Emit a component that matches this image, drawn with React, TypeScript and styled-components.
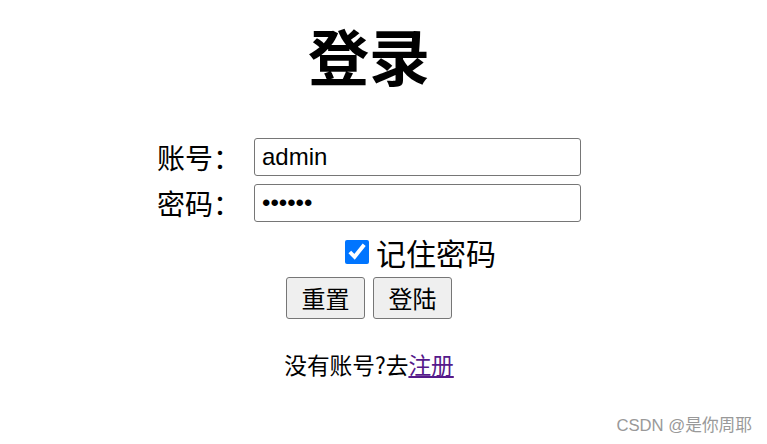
import React from "react";
import styled, { createGlobalStyle } from "styled-components";

const Global = createGlobalStyle`
  html, body { margin: 0; padding: 0; background: #fff; }
  body { font-family: "Liberation Sans", "Noto Sans CJK SC", sans-serif; color: #000; }
`;

const Page = styled.div`
  position: relative;
  width: 767px;
  height: 444px;
  overflow: hidden;
`;

const Column = styled.div`
  width: 738px;
  display: flex;
  flex-direction: column;
  align-items: center;
`;

const Title = styled.h1`
  margin: 25px 0 0;
  font-family: "Noto Sans CJK SC", sans-serif;
  font-size: 61px;
  line-height: 60px;
  font-weight: 700;
`;

const Form = styled.div`
  margin-top: 53px;
  display: grid;
  grid-template-columns: auto 327px;
  column-gap: 13px;
  row-gap: 8px;
  align-items: center;
`;

const Label = styled.label`
  font-family: "Noto Sans CJK SC", sans-serif;
  font-size: 28px;
  line-height: 38px;
`;

const Field = styled.input`
  box-sizing: border-box;
  width: 327px;
  height: 38px;
  padding: 0 7px;
  border: 1px solid #767676;
  border-radius: 3px;
  font-family: "Liberation Sans", sans-serif;
  font-size: 24px;
  color: #000;
  outline: none;
`;

const RememberRow = styled.div`
  grid-column: 2;
  margin-top: 6px;
  display: flex;
  justify-content: center;
  align-items: center;
  gap: 7px;
  height: 32px;
  padding-left: 6px;
`;

const Check = styled.input`
  width: 24px;
  height: 24px;
  margin: 0;
  accent-color: #0075ff;
`;

const CheckText = styled.span`
  font-family: "Noto Sans CJK SC", sans-serif;
  font-size: 30px;
  line-height: 32px;
`;

const Buttons = styled.div`
  margin-top: 9px;
  display: flex;
  gap: 8px;
`;

const Btn = styled.button`
  box-sizing: border-box;
  width: 79px;
  height: 42px;
  background: #efefef;
  border: 1px solid #767676;
  border-radius: 3px;
  font-family: "Noto Sans CJK SC", sans-serif;
  font-size: 24px;
  line-height: 1;
  color: #000;
  padding: 0;
`;

const Footer = styled.p`
  margin: 35px 0 0;
  font-family: "Noto Sans CJK SC", sans-serif;
  font-size: 22.7px;
  line-height: 22px;
`;

const Link = styled.a`
  color: #551a8b;
  text-decoration: underline;
`;

const Watermark = styled.div`
  position: absolute;
  right: 15px;
  bottom: 8px;
  font-family: "Liberation Sans", "Noto Sans CJK SC", sans-serif;
  font-size: 16.7px;
  color: #999;
`;

export default function App() {
  return (
    <Page>
      <Global />
      <Column>
        <Title>登录</Title>
        <Form>
          <Label>账号：</Label>
          <Field type="text" defaultValue="admin" />
          <Label>密码：</Label>
          <Field type="password" defaultValue="123456" />
          <RememberRow>
            <Check type="checkbox" defaultChecked />
            <CheckText>记住密码</CheckText>
          </RememberRow>
        </Form>
        <Buttons>
          <Btn>重置</Btn>
          <Btn>登陆</Btn>
        </Buttons>
        <Footer>
          没有账号?去<Link href="#">注册</Link>
        </Footer>
      </Column>
      <Watermark>CSDN @是你周耶</Watermark>
    </Page>
  );
}
